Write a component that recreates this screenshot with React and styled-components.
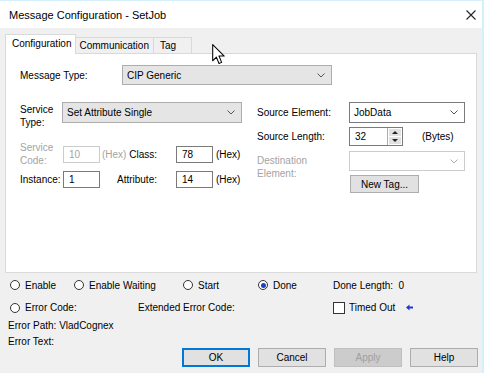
import React from 'react';
import styled, { createGlobalStyle, css } from 'styled-components';

const GlobalStyle = createGlobalStyle`
  html, body {
    margin: 0;
    padding: 0;
  }
  body {
    font-family: "Liberation Sans", Arial, sans-serif;
    font-size: 10px;
    color: #000;
  }
`;

const Window = styled.div`
  position: relative;
  width: 484px;
  height: 373px;
  box-sizing: border-box;
  background: #f0f0f0;
  border-top: 1px solid #d4f1fb;
  border-right: 2px solid #d4f1fb;
  display: flex;
  flex-direction: column;
  overflow: hidden;
`;

const TitleBar = styled.div`
  height: 27px;
  flex-shrink: 0;
  background: #fff;
  display: flex;
  align-items: center;
  justify-content: space-between;
  padding: 0 6px 0 9px;
  font-size: 11px;
`;

const CloseIcon = () => (
  <svg width="10" height="10" viewBox="0 0 10 10">
    <path d="M0.5 0.5 L9.5 9.5 M9.5 0.5 L0.5 9.5" stroke="#222" strokeWidth="1.1" fill="none" />
  </svg>
);

const Body = styled.div`
  padding: 6px 5px 0 5px;
`;

const TabStrip = styled.div`
  display: flex;
  align-items: flex-end;
  height: 20px;
  margin-bottom: -1px;
  position: relative;
  z-index: 1;
`;

const Tab = styled.div`
  box-sizing: border-box;
  border: 1px solid #d9d9d9;
  border-bottom: none;
  display: flex;
  align-items: center;
  ${p => p.$active ? css`
    height: 20px;
    background: #fff;
    padding: 0 4px 2px 6px;
  ` : css`
    height: 17px;
    background: #f0f0f0;
    border-left: none;
    border-bottom: 1px solid #d9d9d9;
    padding: 0 ${p.$pr || 4}px 0 ${p.$pl || 3}px;
  `}
`;

const Panel = styled.div`
  box-sizing: border-box;
  width: 472px;
  height: 220px;
  background: #fff;
  border: 1px solid #d9d9d9;
  padding: 11px 0 0 14px;
`;

const Row = styled.div`
  display: flex;
  align-items: ${p => p.$align || 'center'};
  height: ${p => p.$h}px;
  margin-top: ${p => p.$mt || 0}px;
`;

const Label = styled.div`
  width: ${p => p.$w}px;
  flex-shrink: 0;
  line-height: 13px;
  padding-top: ${p => p.$pt || 0}px;
  color: ${p => (p.$disabled ? '#a3a3a3' : '#000')};
`;

const Select = styled.div`
  box-sizing: border-box;
  width: ${p => p.$w}px;
  height: ${p => p.$h}px;
  display: flex;
  align-items: center;
  justify-content: space-between;
  padding: 0 6px 0 4px;
  border: 1px solid ${p => (p.$white ? (p.$disabled ? '#cccccc' : '#7a7a7a') : '#adadad')};
  background: ${p => (p.$white ? '#fff' : '#e5e5e5')};
`;

const Chevron = ({ color = '#555' }) => (
  <svg width="8" height="5" viewBox="0 0 8 5">
    <path d="M0.5 0.5 L4 4 L7.5 0.5" stroke={color} strokeWidth="1" fill="none" />
  </svg>
);

const Columns = styled.div`
  display: flex;
  margin-top: 17px;
`;

const LeftCol = styled.div`
  width: 237px;
`;

const RightCol = styled.div`
  display: flex;
  flex-direction: column;
`;

const FieldGrid = styled.div`
  display: grid;
  grid-template-columns: 43px 37px 76px 37px auto;
  grid-template-rows: 26px 17px;
  row-gap: 4px;
  align-items: center;
  margin-top: 12px;
`;

const TextBox = styled.div`
  box-sizing: border-box;
  width: ${p => p.$w || 37}px;
  height: ${p => p.$h || 17}px;
  display: flex;
  align-items: center;
  padding-left: 5px;
  background: #fff;
  border: 1px solid ${p => (p.$disabled ? '#cccccc' : '#7a7a7a')};
  color: ${p => (p.$disabled ? '#a3a3a3' : '#000')};
`;

const Middle = styled.div`
  display: flex;
  align-items: center;
  justify-content: ${p => (p.$hex ? 'space-between' : 'flex-end')};
  padding: 0 19px 0 2px;
`;

const Hex = styled.span`
  color: ${p => (p.$disabled ? '#a3a3a3' : '#000')};
  padding-left: ${p => p.$pl || 0}px;
`;

const Spin = styled.div`
  display: flex;
  box-sizing: border-box;
  width: 54px;
  height: 19px;
  border: 1px solid #7a7a7a;
  background: #fff;
`;

const SpinValue = styled.div`
  flex: 1;
  display: flex;
  align-items: center;
  padding-left: 5px;
`;

const SpinButtons = styled.div`
  width: 12px;
  display: flex;
  flex-direction: column;
  gap: 1px;
  padding: 1px;
  background: #fff;
  border-left: 1px solid #adadad;
`;

const SpinButton = styled.div`
  flex: 1;
  background: #e1e1e1;
  display: flex;
  align-items: center;
  justify-content: center;
  &::after {
    content: '';
    border-left: 3px solid transparent;
    border-right: 3px solid transparent;
    ${p => (p.$up ? 'border-bottom: 3px solid #222;' : 'border-top: 3px solid #222;')}
  }
`;

const Button = styled.div`
  box-sizing: border-box;
  width: ${p => p.$w || 68}px;
  height: ${p => p.$h || 19}px;
  display: flex;
  align-items: center;
  justify-content: center;
  background: ${p => (p.$disabled ? '#cccccc' : '#e1e1e1')};
  border: 1px solid ${p => (p.$primary ? '#0078d7' : p.$disabled ? '#bfbfbf' : '#adadad')};
  color: ${p => (p.$disabled ? '#a0a0a0' : '#000')};
  ${p => p.$primary && 'box-shadow: inset 0 0 0 1px #0078d7;'}
`;

const Status = styled.div`
  padding: 5px 0 0 8px;
  display: flex;
  flex-direction: column;
`;

const StatusGrid = styled.div`
  display: grid;
  grid-template-columns: ${p => p.$cols};
  align-items: center;
  height: ${p => p.$h}px;
  margin: ${p => p.$mt || 0}px 0 0 2px;
`;

const Option = styled.div`
  display: flex;
  align-items: center;
  gap: 5px;
`;

const Radio = styled.span`
  box-sizing: border-box;
  width: 10px;
  height: 10px;
  border-radius: 50%;
  border: 1px solid #333;
  background: #fff;
  display: flex;
  align-items: center;
  justify-content: center;
  &::after {
    content: '';
    width: 5px;
    height: 5px;
    border-radius: 50%;
    background: ${p => (p.$checked ? '#1c3fc4' : 'transparent')};
  }
`;

const Check = styled.span`
  box-sizing: border-box;
  width: 12px;
  height: 12px;
  border: 1px solid #333;
  background: #fff;
`;

const TextLine = styled.div`
  height: 13px;
  line-height: 13px;
  margin-top: ${p => p.$mt || 0}px;
`;

const ButtonBar = styled.div`
  display: flex;
  justify-content: flex-end;
  gap: 8px;
  padding-right: 4px;
`;

const Cursor = styled.svg`
  position: absolute;
  left: 212px;
  top: 43px;
`;

const BackArrow = () => (
  <svg width="7" height="7" viewBox="0 0 7 7" style={{ marginLeft: 7 }}>
    <path d="M0 3.5 L3.5 0.5 L3.5 2.5 L7 2.5 L7 4.5 L3.5 4.5 L3.5 6.5 Z" fill="#1a3ad0" />
  </svg>
);

export default function App() {
  return (
    <Window>
      <GlobalStyle />
      <TitleBar>
        <span>Message Configuration - SetJob</span>
        <CloseIcon />
      </TitleBar>
      <Body>
        <TabStrip>
          <Tab $active>Configuration</Tab>
          <Tab>Communication</Tab>
          <Tab $pl={6} $pr={15}>Tag</Tab>
        </TabStrip>
        <Panel>
          <Row $h={20}>
            <Label $w={102}>Message Type:</Label>
            <Select $w={210} $h={20}>
              <span>CIP Generic</span>
              <Chevron />
            </Select>
          </Row>
          <Columns>
            <LeftCol>
              <Row $h={27} $align="flex-start">
                <Label $w={42} $pt={1}>Service<br />Type:</Label>
                <Select $w={180} $h={21}>
                  <span>Set Attribute Single</span>
                  <Chevron />
                </Select>
              </Row>
              <FieldGrid>
                <Label $disabled>Service<br />Code:</Label>
                <TextBox $disabled>10</TextBox>
                <Middle $hex>
                  <Hex $disabled>(Hex)</Hex>
                  <span>Class:</span>
                </Middle>
                <TextBox>78</TextBox>
                <Hex $pl={3}>(Hex)</Hex>
                <Label>Instance:</Label>
                <TextBox>1</TextBox>
                <Middle>
                  <span>Attribute:</span>
                </Middle>
                <TextBox>14</TextBox>
                <Hex $pl={3}>(Hex)</Hex>
              </FieldGrid>
            </LeftCol>
            <RightCol>
              <Row $h={21}>
                <Label $w={92}>Source Element:</Label>
                <Select $w={116} $h={21} $white>
                  <span>JobData</span>
                  <Chevron />
                </Select>
              </Row>
              <Row $h={19} $mt={4}>
                <Label $w={92}>Source Length:</Label>
                <Spin>
                  <SpinValue>32</SpinValue>
                  <SpinButtons>
                    <SpinButton $up />
                    <SpinButton />
                  </SpinButtons>
                </Spin>
                <Hex $pl={19}>(Bytes)</Hex>
              </Row>
              <Row $h={24} $mt={5} $align="flex-start">
                <Label $w={92} $pt={3} $disabled>Destination<br />Element:</Label>
                <Select $w={116} $h={20} $white $disabled>
                  <span />
                  <Chevron color="#aaa" />
                </Select>
              </Row>
              <Row $h={18}>
                <Button $w={69} $h={18} style={{ marginLeft: 93 }}>New Tag...</Button>
              </Row>
            </RightCol>
          </Columns>
        </Panel>
      </Body>
      <Status>
        <StatusGrid $cols="64px 109px 75px 75px auto" $h={14}>
          <Option><Radio />Enable</Option>
          <Option><Radio />Enable Waiting</Option>
          <Option><Radio />Start</Option>
          <Option><Radio $checked />Done</Option>
          <span>Done Length:&nbsp; 0</span>
        </StatusGrid>
        <StatusGrid $cols="128px 195px auto" $h={13} $mt={9}>
          <Option><Radio />Error Code:</Option>
          <span>Extended Error Code:</span>
          <Option style={{ gap: 4 }}>
            <Check />Timed Out<BackArrow />
          </Option>
        </StatusGrid>
        <TextLine $mt={5}>Error Path: VladCognex</TextLine>
        <TextLine $mt={3}>Error Text:</TextLine>
      </Status>
      <ButtonBar>
        <Button $primary>OK</Button>
        <Button>Cancel</Button>
        <Button $disabled>Apply</Button>
        <Button>Help</Button>
      </ButtonBar>
      <Cursor width="14" height="21" viewBox="0 0 13 20">
        <path d="M0.5 0.5 L0.5 16 L4 12.5 L6.5 18.5 L9 17.5 L6.5 11.5 L11.5 11.5 Z" fill="#fff" stroke="#000" strokeWidth="1" strokeLinejoin="round" />
      </Cursor>
    </Window>
  );
}
